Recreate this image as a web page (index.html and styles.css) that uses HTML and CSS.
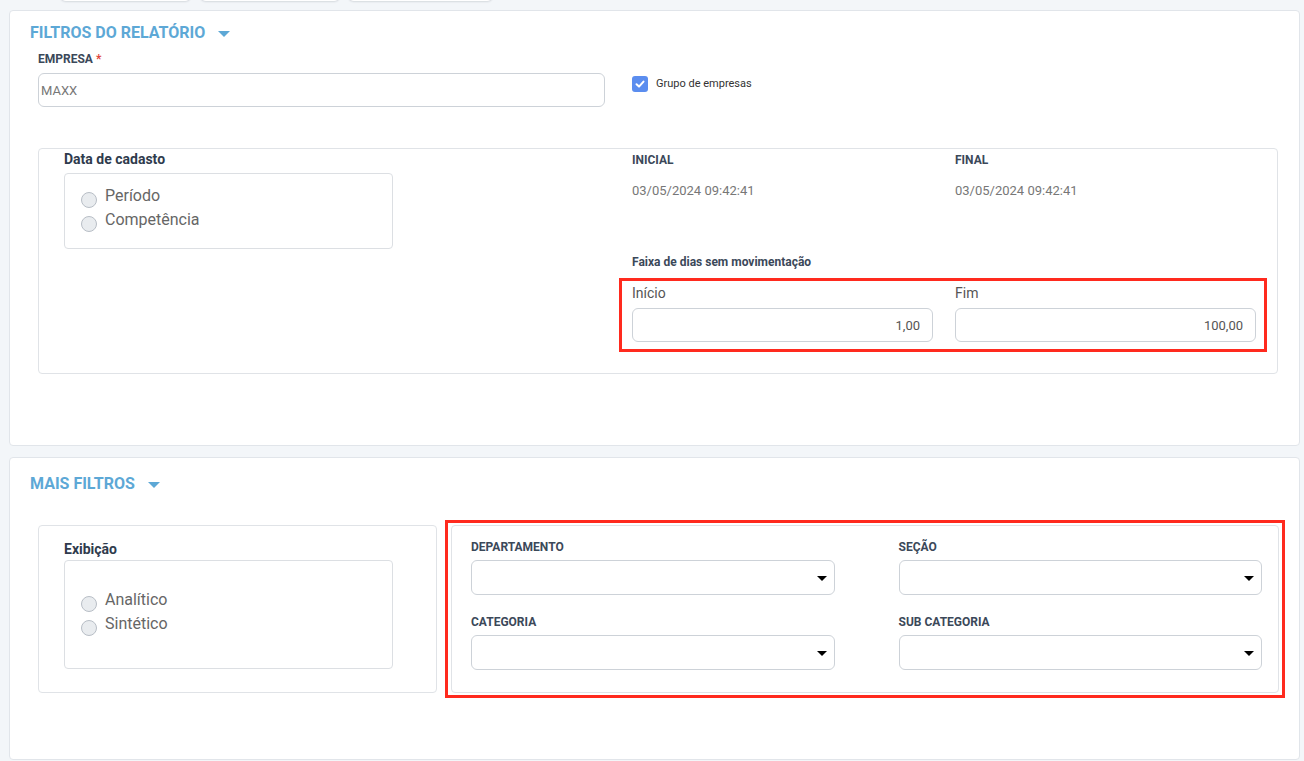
FILE: index.html
```html
<!DOCTYPE html>
<html lang="pt-BR">
<head>
<meta charset="utf-8">
<title>Filtros do relatório</title>
<link rel="stylesheet" href="styles.css">
</head>
<body>
<div class="tabs">
  <div class="tab tab-1"></div>
  <div class="tab tab-2"></div>
  <div class="tab tab-3"></div>
</div>

<section class="card card-main">
  <h2 class="card-title">FILTROS DO RELATÓRIO <span class="caret"></span></h2>
  <div class="card-body">
    <div class="empresa-row">
      <div class="field">
        <div class="label">EMPRESA <span class="req">*</span></div>
        <div class="input input-left">MAXX</div>
      </div>
      <div class="check">
        <span class="checkbox"><svg width="16" height="16" viewBox="0 0 16 16"><polyline points="4.5,8.3 7,10.6 11.5,5.6" fill="none" stroke="#fff" stroke-width="2" stroke-linecap="round" stroke-linejoin="round"/></svg></span>
        <span>Grupo de empresas</span>
      </div>
    </div>

    <div class="panel panel-dates">
      <div class="col-left">
        <div class="group-title">Data de cadasto</div>
        <div class="radio-box radio-box-dates">
          <div class="radio"><span class="circle"></span>Período</div>
          <div class="radio"><span class="circle"></span>Competência</div>
        </div>
      </div>
      <div class="col-right">
        <div class="two-col">
          <div>
            <div class="label">INICIAL</div>
            <div class="date">03/05/2024 09:42:41</div>
          </div>
          <div>
            <div class="label">FINAL</div>
            <div class="date">03/05/2024 09:42:41</div>
          </div>
        </div>
        <div class="label faixa">Faixa de dias sem movimentação</div>
        <div class="highlight highlight-range">
          <div class="two-col">
            <div>
              <div class="sub-label">Início</div>
              <div class="input input-right">1,00</div>
            </div>
            <div>
              <div class="sub-label">Fim</div>
              <div class="input input-right">100,00</div>
            </div>
          </div>
        </div>
      </div>
    </div>
  </div>
</section>

<section class="card card-more">
  <h2 class="card-title">MAIS FILTROS <span class="caret"></span></h2>
  <div class="card-body more-row">
    <div class="panel panel-exib">
      <div class="group-title">Exibição</div>
      <div class="radio-box radio-box-exib">
        <div class="radio"><span class="circle"></span>Analítico</div>
        <div class="radio"><span class="circle"></span>Sintético</div>
      </div>
    </div>
    <div class="highlight highlight-selects">
      <div class="panel panel-selects">
        <div class="select-grid">
          <div>
            <div class="label">DEPARTAMENTO</div>
            <div class="select"><span class="sel-caret"></span></div>
          </div>
          <div>
            <div class="label">SEÇÃO</div>
            <div class="select"><span class="sel-caret"></span></div>
          </div>
          <div>
            <div class="label">CATEGORIA</div>
            <div class="select"><span class="sel-caret"></span></div>
          </div>
          <div>
            <div class="label">SUB CATEGORIA</div>
            <div class="select"><span class="sel-caret"></span></div>
          </div>
        </div>
      </div>
    </div>
  </div>
</section>
</body>
</html>
```

FILE: styles.css
```css
* { box-sizing: border-box; }
html, body { margin: 0; padding: 0; }
body {
  background: #f3f6f9;
  font-family: Roboto, "Liberation Sans", Arial, sans-serif;
  color: #3b4859;
  width: 1304px;
  height: 761px;
  overflow: hidden;
}

/* top tabs, mostly scrolled out of view */
.tabs {
  display: flex;
  align-items: flex-start;
  height: 0;
  padding-left: 60px;
}
.tab {
  height: 32px;
  margin-top: -31px;
  background: #fff;
  border-radius: 0 0 6px 6px;
  box-shadow: 0 1px 2px rgba(30, 40, 60, 0.14);
}
.tab-1 { width: 131px; }
.tab-2 { width: 140px; margin-left: 9px; }
.tab-3 { width: 145px; margin-left: 8px; }

/* cards */
.card {
  background: #fff;
  border: 1px solid #e1e5ea;
  border-radius: 4px;
  margin: 10px 4px 0 9px;
}
.card-main { padding: 12px 21px 71px 20px; }
.card-more { margin-top: 11px; padding: 16px 21px 61px 20px; }

.card-title {
  margin: 0;
  display: flex;
  align-items: center;
  font-size: 16px;
  line-height: 20px;
  font-weight: 700;
  color: #5da8d6;
}
.caret {
  margin-left: 13px;
  margin-top: 1px;
  width: 0;
  height: 0;
  border-left: 6px solid transparent;
  border-right: 6px solid transparent;
  border-top: 6px solid #5da8d6;
}
.card-body { margin-left: 8px; }

/* labels & text */
.label {
  font-size: 12px;
  line-height: 14px;
  font-weight: 700;
  color: #3b4859;
}
.req { color: #e0453a; font-weight: 700; }
.date {
  margin-top: 16px;
  font-size: 13px;
  line-height: 15px;
  color: #777;
}
.sub-label {
  font-size: 14px;
  line-height: 16px;
  color: #555;
}
.group-title {
  font-size: 14px;
  line-height: 17px;
  font-weight: 700;
  color: #2f3b4d;
}

/* inputs */
.input {
  height: 34px;
  border: 1px solid #cdd2d8;
  border-radius: 6px;
  display: flex;
  align-items: center;
  font-size: 13px;
  color: #777;
  background: #fff;
}
.input-left { padding-left: 2px; margin-top: 7px; }
.input-right { justify-content: flex-end; padding-right: 12px; color: #555; margin-top: 7px; }

/* empresa row */
.empresa-row {
  margin-top: 9px;
  display: grid;
  grid-template-columns: 567px auto;
  column-gap: 27px;
}
.check {
  padding-top: 24px;
  display: flex;
  align-items: flex-start;
  gap: 8px;
  font-size: 11px;
  line-height: 16px;
  color: #333;
}
.checkbox {
  width: 16px;
  height: 16px;
  border-radius: 3px;
  background: #5b8def;
  display: block;
}
.checkbox svg { display: block; }

/* panels */
.panel {
  border: 1px solid #e0e3e7;
  border-radius: 4px;
  background: #fff;
}
.panel-dates {
  margin-top: 41px;
  display: grid;
  grid-template-columns: 568px 1fr;
  padding: 0 21px 21px 25px;
}
.col-left { padding-top: 2px; width: 329px; }
.col-left .radio-box-dates { margin-top: 5px; }
.col-right { padding-top: 4px; }
.two-col {
  display: grid;
  grid-template-columns: 1fr 1fr;
  column-gap: 22px;
}
.faixa { margin-top: 57px; }

.highlight { border: 3px solid #ff2a1e; }
.highlight-range {
  margin: 9px -11px 0 -13px;
  padding: 4px 8px 7px 10px;
}

/* radio groups */
.radio-box {
  border: 1px solid #dcdfe3;
  border-radius: 4px;
  width: 329px;
  padding-left: 16px;
}
.radio-box-dates { margin-top: 6px; padding-top: 10px; padding-bottom: 16px; }
.radio-box-exib { margin-top: 2px; padding-top: 27px; padding-bottom: 32px; }
.radio {
  display: flex;
  align-items: flex-start;
  font-size: 16px;
  line-height: 24px;
  color: #666;
}
.circle {
  flex: none;
  width: 16px;
  height: 16px;
  margin: 8px 8px 0 0;
  border-radius: 50%;
  background: #e9ecef;
  border: 1px solid #b8bec6;
}

/* second card */
.more-row {
  margin-top: 26px;
  display: flex;
  align-items: flex-start;
}
.panel-exib {
  flex: none;
  width: 399px;
  margin-top: 5px;
  padding: 15px 0 23px 25px;
}
.highlight-selects {
  flex: none;
  width: 840px;
  margin-left: 8px;
  padding: 2px 3px 2px 3px;
}
.panel-selects {
  padding: 14px 16px 22px 19px;
}
.select-grid {
  display: grid;
  grid-template-columns: 1fr 1fr;
  column-gap: 64px;
  row-gap: 20px;
}
.select {
  margin-top: 6px;
  height: 35px;
  border: 1px solid #cdd2d8;
  border-radius: 6px;
  display: flex;
  align-items: center;
  justify-content: flex-end;
  padding-right: 7px;
}
.sel-caret {
  margin-top: 1px;
  width: 0;
  height: 0;
  border-left: 5px solid transparent;
  border-right: 5px solid transparent;
  border-top: 5px solid #000;
}
```
